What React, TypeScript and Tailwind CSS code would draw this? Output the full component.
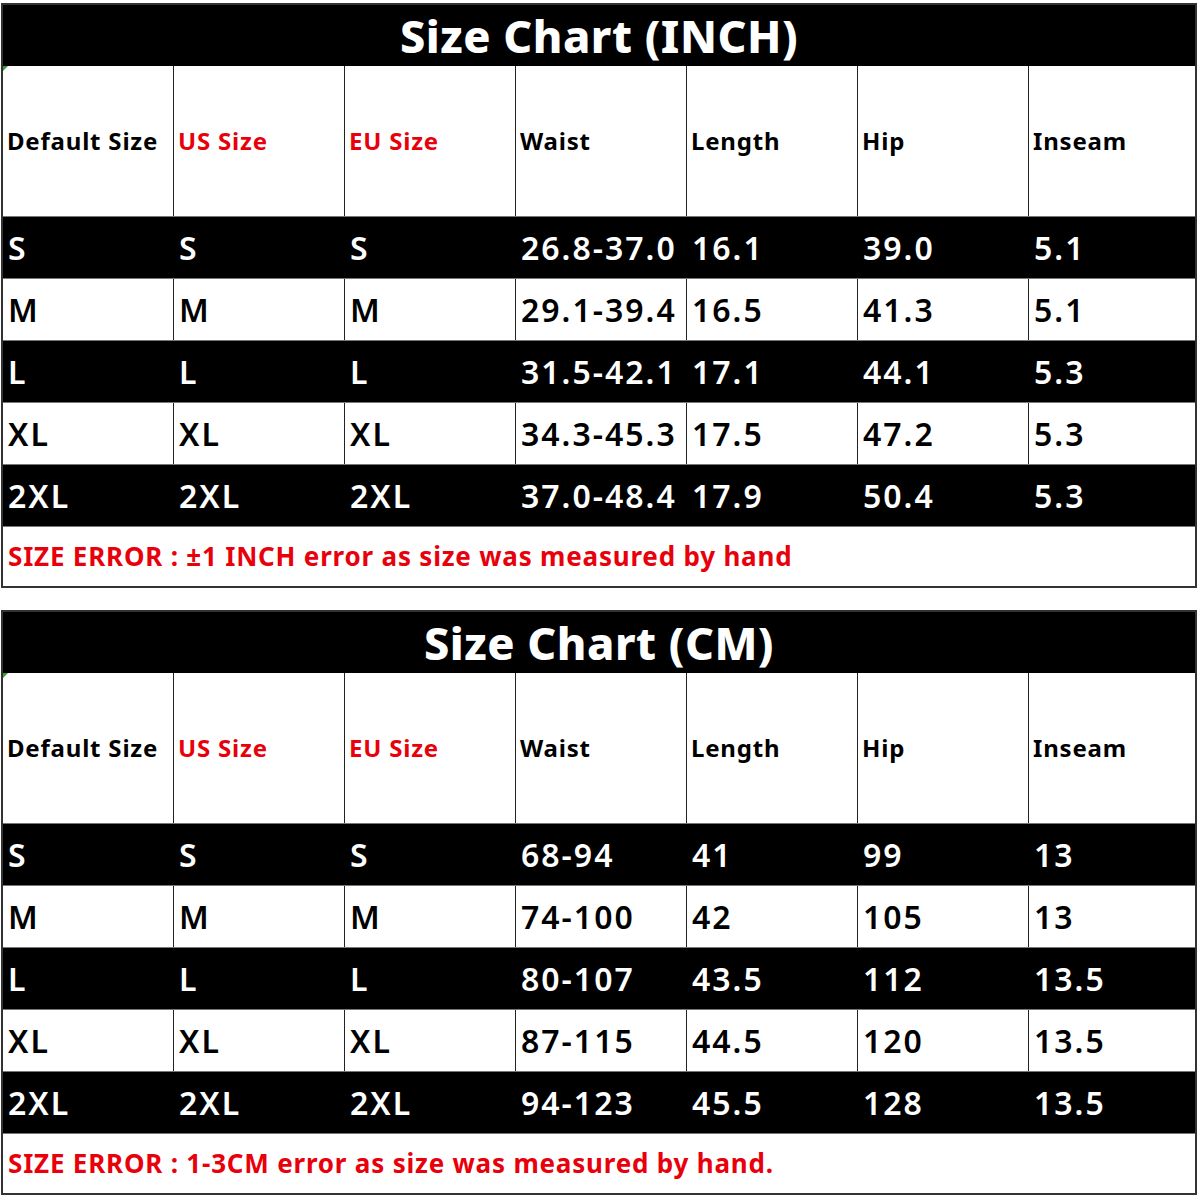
import React from "react";

const cols = ["Default Size", "US Size", "EU Size", "Waist", "Length", "Hip", "Inseam"];
const red = [false, true, true, false, false, false, false];

const inchRows = [
  ["S", "S", "S", "26.8-37.0", "16.1", "39.0", "5.1"],
  ["M", "M", "M", "29.1-39.4", "16.5", "41.3", "5.1"],
  ["L", "L", "L", "31.5-42.1", "17.1", "44.1", "5.3"],
  ["XL", "XL", "XL", "34.3-45.3", "17.5", "47.2", "5.3"],
  ["2XL", "2XL", "2XL", "37.0-48.4", "17.9", "50.4", "5.3"],
];
const cmRows = [
  ["S", "S", "S", "68-94", "41", "99", "13"],
  ["M", "M", "M", "74-100", "42", "105", "13"],
  ["L", "L", "L", "80-107", "43.5", "112", "13.5"],
  ["XL", "XL", "XL", "87-115", "44.5", "120", "13.5"],
  ["2XL", "2XL", "2XL", "94-123", "45.5", "128", "13.5"],
];

const font = { fontFamily: '"Noto Sans", "Open Sans", sans-serif' };

function Chart({ title, rows, note }: { title: string; rows: string[][]; note: string }) {
  return (
    <div className="border-2 border-[#333] w-[1196px] bg-white" style={font}>
      <div className="h-[61px] bg-black flex items-center justify-center">
        <span className="text-white text-[45px] font-extrabold leading-none tracking-[0.5px]">{title}</span>
      </div>
      <div className="grid grid-cols-[171px_171px_171px_171px_171px_171px_170px] h-[150px]">
        {cols.map((c, i) => (
          <div
            key={c}
            className={`relative flex items-center pl-[4px] text-[24px] font-bold tracking-[0.8px] ${i < 6 ? "border-r border-[#222]" : ""} ${red[i] ? "text-[#e8000b]" : "text-black"}`}
          >
            {i === 0 && (
              <span className="absolute left-0 top-0 w-0 h-0 border-t-[5px] border-r-[5px] border-t-[#3a9a3a] border-r-transparent" />
            )}
            {c}
          </div>
        ))}
      </div>
      {rows.map((r, ri) => {
        const dark = ri % 2 === 0;
        return (
          <div
            key={ri}
            className={`grid grid-cols-[171px_171px_171px_171px_171px_171px_170px] h-[62px] border-t border-[#777] ${dark ? "bg-black text-white" : "bg-white text-black"}`}
          >
            {r.map((v, i) => (
              <div
                key={i}
                className={`flex items-center pl-[5px] text-[32px] font-semibold tracking-[2px] ${i < 6 ? (dark ? "border-r border-black" : "border-r border-[#222]") : ""}`}
              >
                {v}
              </div>
            ))}
          </div>
        );
      })}
      <div className="h-[60px] flex items-center pl-[5px] border-t border-[#777]">
        <span className="text-[#e8000b] text-[26px] font-bold tracking-[0.8px]">{note}</span>
      </div>
    </div>
  );
}

export default function App() {
  return (
    <div className="w-[1200px] h-[1199px] bg-white pt-[3px] pl-[1px] flex flex-col gap-[22px]">
      <Chart title="Size Chart (INCH)" rows={inchRows} note="SIZE ERROR : ±1 INCH error as size was measured by hand" />
      <Chart title="Size Chart (CM)" rows={cmRows} note="SIZE ERROR : 1-3CM error as size was measured by hand." />
    </div>
  );
}
